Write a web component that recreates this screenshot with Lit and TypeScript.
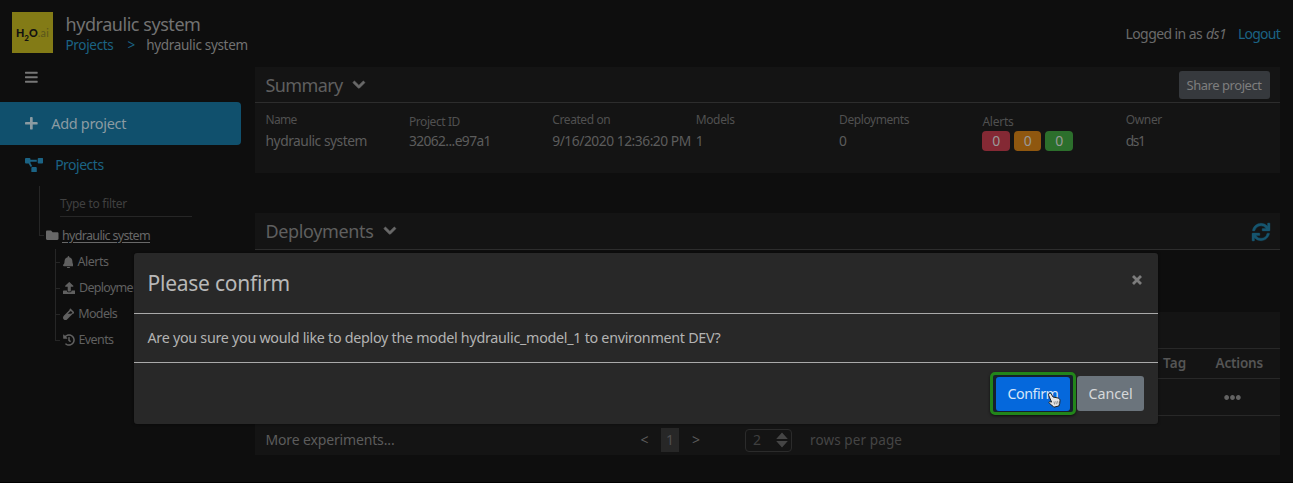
import { LitElement, html, css, svg } from "lit";
import { customElement, property } from "lit/decorators.js";

/* A run of text tracked so that it fills a given width. */
@customElement("fit-text")
class FitText extends LitElement {
  @property({ type: Number }) w = 0;
  @property() text = "";
  static styles = css`
    :host { display: inline-block; white-space: pre; text-decoration: inherit; }
  `;
  render() {
    return html`<span>${this.text}</span>`;
  }
  updated() {
    const span = this.renderRoot.querySelector("span") as HTMLElement;
    span.style.letterSpacing = "0px";
    const natural = span.getBoundingClientRect().width;
    this.style.width = this.w + "px";
    span.style.letterSpacing = (this.w - natural) / this.text.length + "px";
  }
}

const fit = (text: string, w: number) => html`<fit-text .text=${text} .w=${w}></fit-text>`;

const PATHS: Record<string, [number, string]> = {
  chevron: [448, "M207 381.500L12.700 187.100c-9.400-9.400-9.400-24.600 0-33.900l22.700-22.700c9.300-9.300 24.500-9.400 33.900 0L224 284.500l154.700-154c9.400-9.400 24.600-9.300 34 0l22.600 22.700c9.400 9.400 9.400 24.600 0 33.900L241 381.500c-9.400 9.300-24.600 9.300-34 0z"],
  plus: [448, "M416 208H272V64c0-17.700-14.300-32-32-32h-32c-17.700 0-32 14.300-32 32v144H32c-17.700 0-32 14.300-32 32v32c0 17.700 14.300 32 32 32h144v144c0 17.700 14.300 32 32 32h32c17.700 0 32-14.300 32-32V304h144c17.700 0 32-14.300 32-32v-32c0-17.700-14.300-32-32-32z"],
  bars: [448, "M16 132h416c9 0 16-7 16-16V76c0-9-7-16-16-16H16C7 60 0 67 0 76v40c0 9 7 16 16 16zm0 160h416c9 0 16-7 16-16v-40c0-9-7-16-16-16H16c-9 0-16 7-16 16v40c0 9 7 16 16 16zm0 160h416c9 0 16-7 16-16v-40c0-9-7-16-16-16H16c-9 0-16 7-16 16v40c0 9 7 16 16 16z"],
  diagram: [640, "M384 320H256c-17.670 0-32 14.330-32 32v128c0 17.670 14.330 32 32 32h128c17.670 0 32-14.330 32-32V352c0-17.670-14.330-32-32-32zM192 32c0-17.670-14.330-32-32-32H32C14.330 0 0 14.330 0 32v128c0 17.670 14.330 32 32 32h95.720l73.160 128.040C211.980 300.980 232.400 288 256 288h.28L192 175.510V128h224V64H192V32zM608 0H480c-17.670 0-32 14.330-32 32v128c0 17.670 14.330 32 32 32h128c17.670 0 32-14.330 32-32V32c0-17.670-14.330-32-32-32z"],
  folder: [512, "M464 128H272l-64-64H48C21.490 64 0 85.490 0 112v288c0 26.510 21.490 48 48 48h416c26.510 0 48-21.490 48-48V176c0-26.510-21.490-48-48-48z"],
  bell: [448, "M224 512c35.320 0 63.970-28.650 63.970-64H160.030c0 35.350 28.650 64 63.970 64zm215.390-149.710c-19.320-20.760-55.470-51.990-55.470-154.290 0-77.700-54.480-139.900-127.940-155.160V32c0-17.670-14.320-32-31.980-32s-31.980 14.330-31.980 32v20.840C118.560 68.100 64.080 130.300 64.080 208c0 102.300-36.150 133.530-55.470 154.290-6 6.450-8.660 14.160-8.610 21.710.11 16.400 12.980 32 32.100 32h383.800c19.120 0 32-15.600 32.100-32 .05-7.550-2.610-15.270-8.610-21.710z"],
  upload: [512, "M296 384h-80c-13.300 0-24-10.700-24-24V192h-87.700c-17.800 0-26.700-21.500-14.100-34.100L242.300 5.700c7.500-7.500 19.800-7.500 27.300 0l152.200 152.200c12.600 12.600 3.700 34.100-14.100 34.100H320v168c0 13.300-10.700 24-24 24zm216-8v112c0 13.300-10.700 24-24 24H24c-13.300 0-24-10.700-24-24V376c0-13.300 10.700-24 24-24h136v8c0 30.900 25.100 56 56 56h80c30.900 0 56-25.100 56-56v-8h136c13.300 0 24 10.700 24 24z"],
  vial: [480, "M477.700 186.100L309.500 18.300c-3.100-3.100-8.200-3.100-11.300 0l-34 33.900c-3.100 3.100-3.100 8.200 0 11.300l11.200 11.100L33 316.500c-38.800 38.700-45.100 102-9.400 143.500 20.600 24 49.500 36 78.400 35.900 26.400 0 52.800-10 72.900-30.100l246.300-245.700 11.200 11.100c3.100 3.100 8.200 3.100 11.300 0l34-33.900c3.100-3 3.100-8.100 0-11.200zM335 240H195l124-120 68 68-52 52z"],
  history: [512, "M504 255.530c.25 136.640-111.180 248.370-247.820 248.470-59 0-113.220-20.530-155.820-54.910-11.080-8.940-11.900-25.540-1.840-35.600l11.270-11.270c8.600-8.600 22.350-9.550 31.890-1.980C173 425.130 212.780 440 256 440c101.700 0 184-82.300 184-184 0-101.700-82.300-184-184-184-48.800 0-93.150 18.970-126.070 49.930l50.750 50.750c10.080 10.080 2.950 27.320-11.300 27.320H24c-8.840 0-16-7.160-16-16V38.630c0-14.260 17.230-21.400 27.300-11.320l49.380 49.380C129.200 34.100 189.550 8 256 8c136.800 0 247.750 110.780 248 247.530zm-180.900 78.780l9.800-12.630c8.140-10.460 6.250-25.540-4.200-33.680L288 256.350V152c0-13.250-10.750-24-24-24h-16c-13.250 0-24 10.750-24 24v135.650l65.400 50.880c10.470 8.130 25.550 6.250 33.700-4.220z"],
  sync: [512, "M440.650 12.570l4 82.770A247.160 247.160 0 0 0 255.830 8C134.730 8 33.910 94.920 12.290 209.820A12 12 0 0 0 24.090 224h49.050a12 12 0 0 0 11.670-9.260 175.910 175.910 0 0 1 317-56.940l-101.460-4.860a12 12 0 0 0-12.570 12v47.410a12 12 0 0 0 12 12H500a12 12 0 0 0 12-12V12a12 12 0 0 0-12-12h-47.370a12 12 0 0 0-11.980 12.570zM255.830 432a175.610 175.610 0 0 1-146-77.800l101.800 4.870a12 12 0 0 0 12.570-12v-47.400a12 12 0 0 0-12-12H12a12 12 0 0 0-12 12V500a12 12 0 0 0 12 12h47.350a12 12 0 0 0 12-12.600l-4.150-82.570A247.170 247.170 0 0 0 255.830 504c121.110 0 221.930-86.920 243.550-201.820a12 12 0 0 0-11.800-14.180h-49.050a12 12 0 0 0-11.670 9.260A175.860 175.860 0 0 1 255.830 432z"],
  dots: [512, "M328 256c0 39.800-32.200 72-72 72s-72-32.200-72-72 32.200-72 72-72 72 32.200 72 72zm104-72c-39.800 0-72 32.200-72 72s32.200 72 72 72 72-32.200 72-72-32.200-72-72-72zm-352 0c-39.800 0-72 32.200-72 72s32.200 72 72 72 72-32.200 72-72-32.200-72-72-72z"],
};

const icon = (name: string, h: number) => {
  const [vw, d] = PATHS[name];
  return html`<svg class="icon ${name}" width=${(vw / 512) * h} height=${h} viewBox="0 0 ${vw} 512">${svg`<path d=${d}/>`}</svg>`;
};

@customElement("app-root")
class AppRoot extends LitElement {
  static styles = css`
    :host {
      display: block; position: relative; box-sizing: border-box;
      width: 1293px; height: 483px; overflow: hidden;
      background: #0e0e0e; border-bottom: 1px solid #000;
      font-family: "Noto Sans", "Open Sans", sans-serif;
      font-size: 14px; line-height: 20px; color: #666;
    }
    .icon { display: block; flex: none; fill: currentColor; }
    .row { display: flex; align-items: center; }
    header { display: flex; height: 67px; padding: 12px 13px 0 12px; box-sizing: border-box; }
    .logo {
      width: 41px; height: 41px; background: #837b16; color: #111; flex: none;
      display: flex; align-items: center; justify-content: center;
      font: 900 10.800px/12px Lato, sans-serif;
    }
    .logo small { font-size: 8px; align-self: flex-end; line-height: 8px; margin-bottom: 11px; }
    .logo i { font-style: normal; font-weight: 400; color: #5a561c; letter-spacing: 0.3px; }
    .titles { margin-left: 12.500px; flex: 1; }
    .title { font-size: 18px; line-height: 24px; height: 23px; color: #727272; }
    .crumbs { font-size: 13.500px; line-height: 20px; height: 20px; color: #727272; }
    .blue { color: #1b6384; }
    .gap-a { margin-left: 14px; }
    .gap-b { margin-left: 11px; }
    .user { height: 20px; margin-top: 12px; font-size: 14px; color: #6a6a6a; }
    .user em { margin: 0 12px 0 4px; display: block; }
    .body { display: flex; }
    aside { width: 254.500px; flex: none; }
    .burger { padding: 3px 0 0 25px; height: 34.500px; box-sizing: border-box; color: #777; }
    .add {
      width: 241px; height: 43px; box-sizing: border-box; border-radius: 0 4px 4px 0;
      background: #10506d; color: #8b9ba2; padding: 0 0 1px 25px; gap: 13.500px; font-size: 14.500px;
    }
    .add .plus { margin-top: 1px; }
    .projects { height: 41.500px; padding: 0 0 1px 25px; box-sizing: border-box; gap: 12px; color: #1b6384; font-size: 14px; }
    .tree { margin-left: 39px; }
    .branch { border-left: 1px solid #262626; height: 50px; padding: 0 0 0 20px; width: 154px; box-sizing: border-box; }
    .filter {
      height: 31px; box-sizing: border-box; border-bottom: 1px solid #262626; width: 132px;
      font-size: 12px; line-height: 36px; color: #404040;
    }
    .node { font-size: 12.500px; height: 26px; color: #606060; }
    .node.root { height: 25px; margin-top: -13px; color: #686868; gap: 4px; margin-left: 1px; }
    .node.root .stub { margin-right: -2px; }
    .node.root .folder { margin-right: -0.500px; }
    .node.root u { text-underline-offset: 2px; }
    .leaf { gap: 4px; margin-left: 2.500px; }
    .kids { margin-left: 16px; border-left: 1px solid #262626; height: 92px; margin-top: 1px; }
    .stub { width: 4px; height: 1px; background: #262626; }
    main { width: 1025.500px; flex: none; }
    .panel { background: #141414; box-sizing: border-box; }
    .panel-head {
      height: 36px; box-sizing: border-box; border-bottom: 1px solid #2d2d2d;
      padding: 0 10.500px 0 11px; font-size: 18px; line-height: 36px; color: #5f5f5f;
    }
    .panel-head .chevron { margin-left: 10px; color: #6a6a6a; stroke: currentColor; stroke-width: 36px; overflow: visible; }
    .spacer { flex: 1; }
    .share {
      height: 28px; width: 91px; background: #36393d; border-radius: 3px; font-size: 13px;
      color: #7e7e7e; line-height: 28px; text-align: center;
    }
    .summary { height: 106px; }
    .cells { display: grid; grid-template-columns: repeat(7, 143.400px); margin-left: 11px; padding-top: 8px; }
    .cell label { display: block; font-size: 12px; line-height: 18px; height: 19px; color: #505050; }
    .cell.low label { line-height: 21px; }
    .cell div { height: 22px; line-height: 22px; font-size: 13.800px; color: #5c5c5c; }
    .cell .badges { display: flex; gap: 4px; padding-top: 1px; }
    .badge { width: 27.500px; height: 20px; line-height: 20px; border-radius: 4px; text-align: center; color: #999; font-size: 14px; }
    .red { background: #842934; } .orange { background: #8f570f; } .green { background: #2c6f2c; }
    .deploys { margin-top: 40px; height: 37px; }
    .deploys .panel-head { height: 37px; }
    .deploys .sync { color: #16556f; stroke: currentColor; stroke-width: 10px; overflow: visible; margin-top: 1px; }
    .models { margin-top: 62px; height: 143px; }
    .models .top { height: 37px; box-sizing: border-box; border-bottom: 1px solid #282828; }
    .tr { box-sizing: border-box; border-bottom: 1px solid #282828; justify-content: flex-end; }
    .th { height: 30px; font-weight: 600; font-size: 13.500px; color: #555; padding: 0 17px 2px 0; gap: 29px; }
    .td { height: 37px; padding-right: 39.500px; color: #636363; }
    .pager { height: 39px; padding: 9px 10px 0 11px; box-sizing: border-box; color: #5c5c5c; }
    .nav { margin-left: 246px; }
    .num { width: 18px; height: 24px; line-height: 23px; margin: 0 13px 1px 12.500px; background: #272727; text-align: center; color: #505050; }
    .select {
      width: 47px; height: 23px; box-sizing: border-box; border: 1px solid #2b2b2b; border-radius: 4px;
      margin: 0 18px 0 45px; padding: 0 3px 0 7px; justify-content: space-between; color: #3f3f3f; font-size: 14px;
    }
    .rows { color: #454545; font-size: 13.500px; }
    .modal {
      position: absolute; left: 134px; top: 253px; width: 1024px; height: 171px; box-sizing: border-box;
      background: #282828; border-radius: 3px; color: #b3b3b3; box-shadow: 0 0 3px #0008;
    }
    .m-head { height: 61px; box-sizing: border-box; border-bottom: 1px solid #aaa; padding: 0 16px 0 13.500px; font-size: 21px; line-height: 28px; color: #b8b8b8; }
    .close { color: #7c7c7c; margin-top: -6px; }
    .m-body { height: 49px; box-sizing: border-box; border-bottom: 1px solid #aaa; padding: 0 13.500px; font-size: 14.300px; }
    .m-foot { display: flex; justify-content: flex-end; padding: 9px 14px 0 0; gap: 1px; }
    .ring {
      width: 86px; height: 43px; box-sizing: border-box; border: 3px solid #22851a; border-radius: 5px;
      padding: 2px 3px; background: #16202c; box-shadow: 0 1px 3px #000a;
    }
    .btn { height: 35px; line-height: 35px; border-radius: 3px; text-align: center; color: #d6d8da; font-size: 14.300px; }
    .confirm { background: #0568dc; color: #d4e4f8; height: 34px; line-height: 33px; }
    .cancel { width: 67px; background: #6b747c; margin-top: 4px; }
    .pointer { position: absolute; left: 1046px; top: 391px; }
  `;

  private cell(label: string, lw: number, value: string, vw: number, low = false) {
    return html`<div class="cell ${low ? "low" : ""}"><label>${fit(label, lw)}</label><div>${fit(value, vw)}</div></div>`;
  }

  private leaf(name: string, size: number, text: string, w: number) {
    return html`<div class="row node"><span class="stub"></span><span class="row leaf">${icon(name, size)}${fit(text, w)}</span></div>`;
  }

  render() {
    return html`
      <header>
        <div class="logo">H<small>2</small>O<i>.ai</i></div>
        <div class="titles">
          <div class="title">${fit("hydraulic system", 135)}</div>
          <div class="row crumbs">
            <span class="blue">${fit("Projects", 48)}</span>
            <span class="blue gap-a">&gt;</span>
            <span class="gap-b">${fit("hydraulic system", 101.5)}</span>
          </div>
        </div>
        <div class="row user">${fit("Logged in as", 76.5)}<em>${fit("ds1", 20)}</em><span class="blue">${fit("Logout", 42)}</span></div>
      </header>
      <div class="body">
        <aside>
          <div class="burger">${icon("bars", 14.5)}</div>
          <div class="row add">${icon("plus", 14.5)}${fit("Add project", 75)}</div>
          <div class="row projects">${icon("diagram", 14.5)}${fit("Projects", 48.5)}</div>
          <div class="tree">
            <div class="branch"><div class="filter">${fit("Type to filter", 67)}</div></div>
            <div class="row node root"><span class="stub"></span>${icon("folder", 12.5)}<u>${fit("hydraulic system", 88)}</u></div>
            <div class="kids">
              ${this.leaf("bell", 12.5, "Alerts", 31)}
              ${this.leaf("upload", 12.5, "Deployments", 70)}
              ${this.leaf("vial", 12.5, "Models", 39)}
              ${this.leaf("history", 12, "Events", 35)}
            </div>
          </div>
        </aside>
        <main>
          <section class="panel summary">
            <div class="row panel-head">${fit("Summary", 77)}${icon("chevron", 13.5)}<span class="spacer"></span><span class="share">${fit("Share project", 75)}</span></div>
            <div class="cells">
              ${this.cell("Name", 31, "hydraulic system", 101.5)}
              ${this.cell("Project ID", 51, "32062...e97a1", 82, true)}
              ${this.cell("Created on", 58, "9/16/2020 12:36:20 PM", 138.5)}
              ${this.cell("Models", 39, "1", 6)}
              ${this.cell("Deployments", 70, "0", 8)}
              <div class="cell low"><label>${fit("Alerts", 31)}</label>
                <div class="badges"><span class="badge red">0</span><span class="badge orange">0</span><span class="badge green">0</span></div></div>
              ${this.cell("Owner", 36, "ds1", 18.5)}
            </div>
          </section>
          <section class="panel deploys">
            <div class="row panel-head">${fit("Deployments", 108)}${icon("chevron", 13.5)}<span class="spacer"></span>${icon("sync", 18)}</div>
          </section>
          <section class="panel models">
            <div class="top"></div>
            <div class="row tr th">${fit("Tag", 23.5)}${fit("Actions", 47.5)}</div>
            <div class="row tr td">${icon("dots", 17)}</div>
            <div class="row pager">
              ${fit("More experiments...", 129)}
              <span class="row nav"><span>&lt;</span><span class="num">1</span><span>&gt;</span></span>
              <span class="row select">2<svg width="12" height="16" viewBox="0 0 12 16"><path fill="#454545" d="M6 .5l5.800 6.500H.2zM6 15.500L11.800 9H.2z"/></svg></span>
              <span class="rows">${fit("rows per page", 92)}</span>
            </div>
          </section>
        </main>
      </div>
      <div class="modal">
        <div class="row m-head">${fit("Please confirm", 142.5)}<span class="spacer"></span>
          <svg class="close" width="10" height="10" viewBox="0 0 10 10"><path d="M1 1l8 8M9 1L1 9" stroke="currentColor" stroke-width="2.800"/></svg></div>
        <div class="row m-body">${fit("Are you sure you would like to deploy the model hydraulic_model_1 to environment DEV?", 573)}</div>
        <div class="m-foot">
          <div class="ring"><div class="btn confirm">${fit("Confirm", 51)}</div></div>
          <div class="btn cancel">${fit("Cancel", 44)}</div>
        </div>
      </div>
      <svg class="pointer" width="16" height="18" viewBox="0 0 16 18"><path fill="#e6e6e6" stroke="#222" stroke-width="1" d="M3 2.500c.9-.7 1.800-.3 2.300.6L7 6l5 1c1.300.4 2 1.200 2 2.500l-.3 3-.9 2.500-5 1.200C6.500 14.500 5 13.500 3.300 12.300c-.9-.8-.2-1.800.8-1.600l1.500.4L2.700 4.400c-.3-.8-.2-1.500.3-1.900z"/><path stroke="#777" stroke-width=".8" d="M8 10.500l.6 3M9.800 10.200l.6 3M11.600 9.900l.4 2.800"/></svg>
    `;
  }
}
